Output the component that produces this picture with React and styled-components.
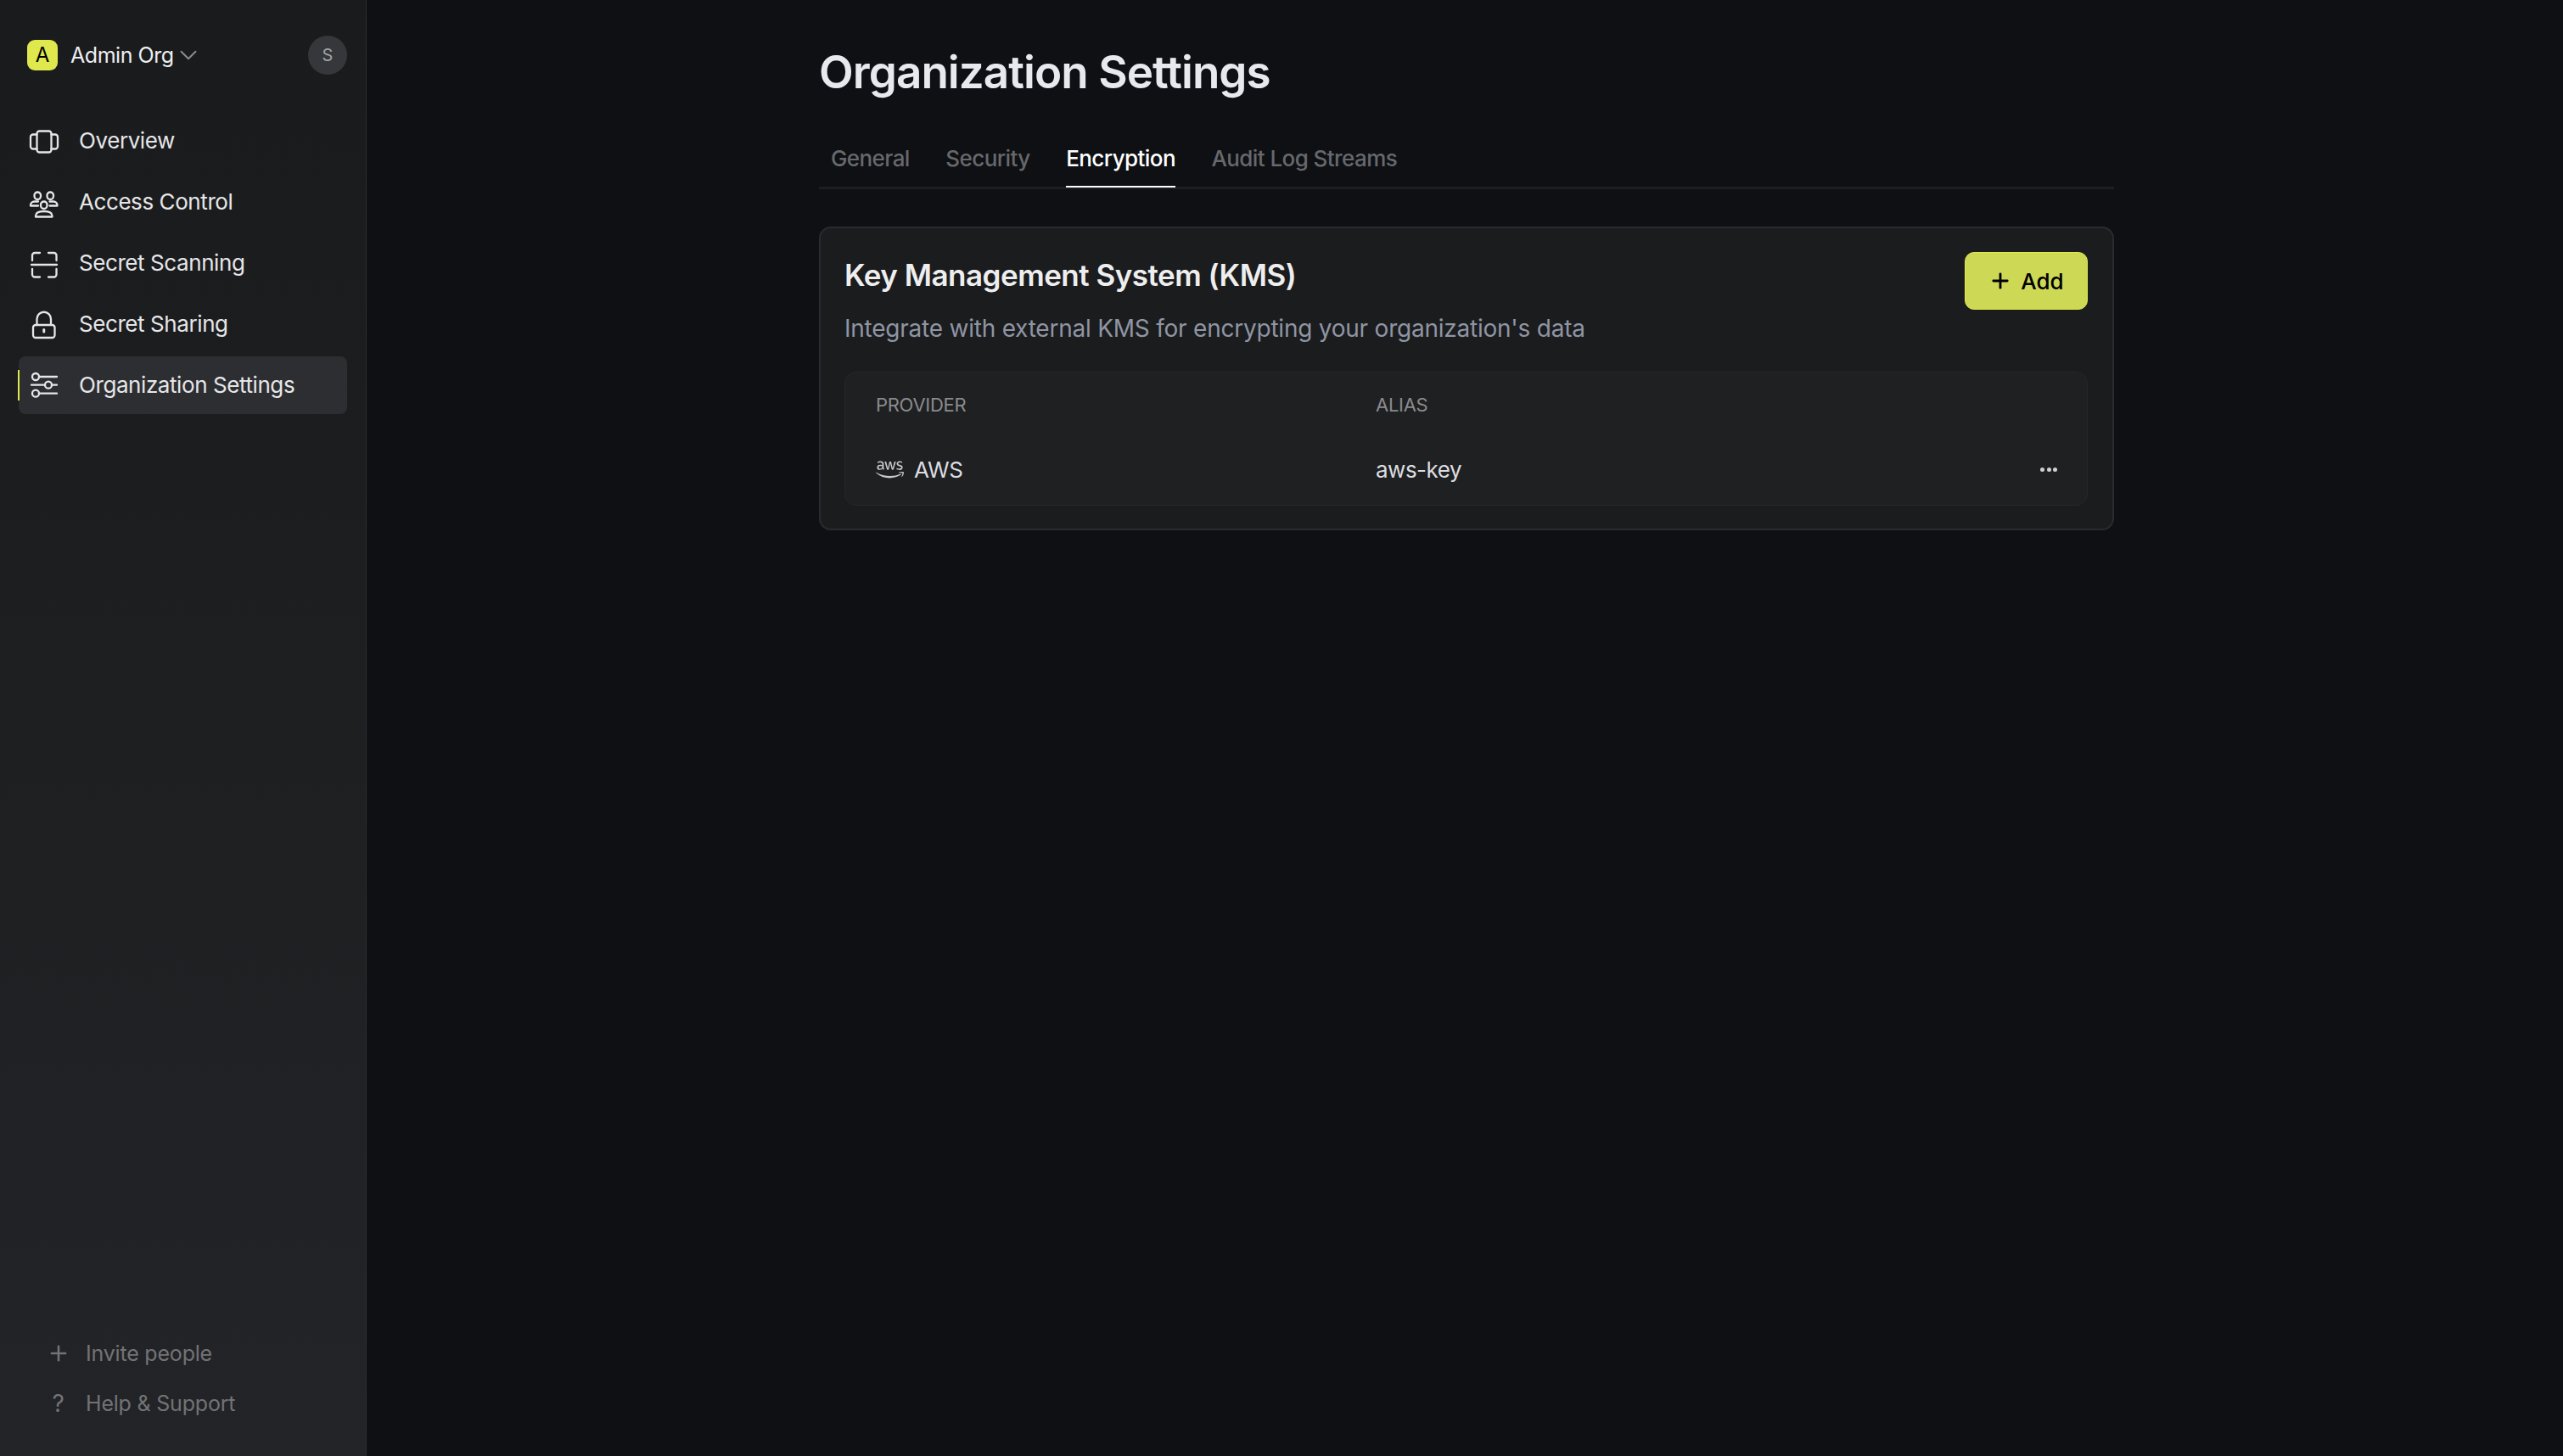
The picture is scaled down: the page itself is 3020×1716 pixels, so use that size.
import React from "react";
import styled, { createGlobalStyle } from "styled-components";
import { FaAws } from "react-icons/fa";
import { Plus, ChevronDown } from "lucide-react";

const NAV_ITEMS = [
  { label: "Overview", icon: "overview" },
  { label: "Access Control", icon: "access" },
  { label: "Secret Scanning", icon: "scan" },
  { label: "Secret Sharing", icon: "lock" },
  { label: "Organization Settings", icon: "sliders", active: true },
];

const TABS = ["General", "Security", "Encryption", "Audit Log Streams"];

const NavIcon = ({ name }) => (
  <svg width="36" height="36" viewBox="0 0 36 36" fill="none" stroke="currentColor" strokeWidth="2.3" strokeLinecap="round" strokeLinejoin="round" overflow="visible">
    {name === "overview" && (
      <>
        <rect x="9.500" y="6.500" width="17" height="25" rx="3" />
        <path d="M9.500 10.500H5a3 3 0 0 0-3 3v11a3 3 0 0 0 3 3h4.500" />
        <path d="M26.500 10.500H31a3 3 0 0 1 3 3v11a3 3 0 0 1-3 3h-4.500" />
      </>
    )}
    {name === "access" && (
      <>
        <rect x="6.500" y="6.500" width="7.500" height="8.500" rx="3.700" />
        <rect x="21.500" y="6.500" width="7.500" height="8.500" rx="3.700" />
        <rect x="14" y="17.500" width="7.500" height="8.500" rx="3.700" />
        <path d="M11 17.500H6.500a4.500 4.500 0 0 0-4.500 4.500v.5h9" />
        <path d="M24.500 17.500H29a4.500 4.500 0 0 1 4.500 4.500v.5h-9" />
        <path d="M8 35.500v-1c0-3.500 3-5.500 9.800-5.500s9.700 2 9.700 5.500v1z" />
      </>
    )}
    {name === "scan" && (
      <>
        <path d="M4 15V9a3 3 0 0 1 3-3h6" />
        <path d="M23 6h6.500a3 3 0 0 1 3 3v6" />
        <path d="M4 25v6.500a3 3 0 0 0 3 3h6" />
        <path d="M32.500 25v6.500a3 3 0 0 1-3 3H23" />
        <path d="M3 20h30" />
      </>
    )}
    {name === "lock" && (
      <>
        <rect x="5" y="19" width="25.500" height="15" rx="3" />
        <path d="M9.500 19v-7a8.250 8.250 0 0 1 16.500 0v7" />
        <path d="M17.750 24.500v2.500" strokeWidth="3" />
      </>
    )}
    {name === "sliders" && (
      <>
        <circle cx="8" cy="8" r="4" />
        <path d="M12 8h21" />
        <circle cx="23" cy="17.700" r="4" />
        <path d="M3 17.700h16M27 17.700h6" />
        <circle cx="8" cy="27.700" r="4" />
        <path d="M12 27.700h21" />
      </>
    )}
  </svg>
);

const App = () => {
  return (
    <>
      <GlobalStyle />
      <Page>
        <Sidebar>
          <OrgHeader>
            <OrgSwitcher>
              <OrgBadge>A</OrgBadge>
              <OrgName>Admin Org</OrgName>
              <ChevronDown size={34} color="#8a8b8d" strokeWidth={1.4} />
            </OrgSwitcher>
            <Avatar>S</Avatar>
          </OrgHeader>

          <NavList>
            {NAV_ITEMS.map((item) => (
              <NavItem key={item.label} $active={item.active}>
                <IconSlot>
                  <NavIcon name={item.icon} />
                </IconSlot>
                {item.label}
              </NavItem>
            ))}
          </NavList>

          <FooterLinks>
            <FooterLink>
              <FooterIcon>
                <Plus size={28} strokeWidth={2.2} />
              </FooterIcon>
              Invite people
            </FooterLink>
            <FooterLink>
              <FooterIcon>?</FooterIcon>
              Help &amp; Support
            </FooterLink>
          </FooterLinks>
        </Sidebar>

        <Main>
          <Title>Organization Settings</Title>
          <TabBar>
            {TABS.map((tab) => (
              <Tab key={tab} $active={tab === "Encryption"}>
                {tab}
              </Tab>
            ))}
          </TabBar>

          <Card>
            <CardHeader>
              <div>
                <CardTitle>Key Management System (KMS)</CardTitle>
                <CardSubtitle>Integrate with external KMS for encrypting your organization's data</CardSubtitle>
              </div>
              <AddButton>
                <Plus size={28} strokeWidth={2.4} />
                Add
              </AddButton>
            </CardHeader>

            <TableWrap>
              <HeadRow>
                <HeadCell>Provider</HeadCell>
                <HeadCell>Alias</HeadCell>
              </HeadRow>
              <BodyRow>
                <ProviderCell>
                  <FaAws size={33} color="#c9cacc" />
                  AWS
                </ProviderCell>
                <BodyCell>aws-key</BodyCell>
                <Dots>
                  <Dot />
                  <Dot />
                  <Dot />
                </Dots>
              </BodyRow>
            </TableWrap>
          </Card>
        </Main>
      </Page>
    </>
  );
};

export default App;

const GlobalStyle = createGlobalStyle`
  html, body {
    margin: 0;
    padding: 0;
    background: #0e1014;
  }
  * {
    box-sizing: border-box;
  }
`;

const Page = styled.div`
  display: flex;
  width: 100%;
  height: 1716px;
  overflow: hidden;
  background: #0e1014;
  font-family: Inter, "Liberation Sans", sans-serif;
`;

const Sidebar = styled.aside`
  width: 432px;
  flex-shrink: 0;
  display: flex;
  flex-direction: column;
  padding: 41px 22px 0 22px;
  background: linear-gradient(180deg, #1a1b1d 0%, #1c1d1f 30%, #232427 100%);
  border-right: 1px solid #2c2d30;
`;

const OrgHeader = styled.div`
  display: flex;
  align-items: center;
  justify-content: space-between;
  height: 47px;
  margin-bottom: 44px;
`;

const OrgSwitcher = styled.div`
  display: flex;
  align-items: center;
  padding-left: 10px;
`;

const OrgBadge = styled.div`
  width: 36px;
  height: 36px;
  margin-right: 15px;
  border-radius: 9px;
  background: #dfe84d;
  color: #000;
  font-size: 24px;
  display: flex;
  align-items: center;
  justify-content: center;
`;

const OrgName = styled.span`
  font-size: 25px;
  letter-spacing: -0.45px;
  color: #eeeef0;
`;

const Avatar = styled.div`
  width: 46px;
  height: 46px;
  border-radius: 50%;
  background: #36373a;
  color: #a0a1a4;
  font-size: 20px;
  display: flex;
  align-items: center;
  justify-content: center;
`;

const NavList = styled.nav`
  display: flex;
  flex-direction: column;
  gap: 4px;
  flex: 1;
`;

const NavItem = styled.div`
  position: relative;
  height: 68px;
  display: flex;
  align-items: center;
  gap: 23px;
  padding-left: 12px;
  padding-bottom: 1px;
  border-radius: 8px;
  font-size: 26px;
  letter-spacing: -0.42px;
  color: #e6e6e8;
  background: ${(props) => (props.$active ? "#2d2e32" : "transparent")};

  ${(props) =>
    props.$active &&
    `
    &::before {
      content: "";
      position: absolute;
      left: -1px;
      top: 16px;
      width: 2px;
      height: 36px;
      background: #dfe84d;
    }
  `}
`;

const IconSlot = styled.span`
  width: 36px;
  height: 36px;
  flex-shrink: 0;
  display: flex;
  color: #e6e6e8;
`;

const FooterLinks = styled.div`
  display: flex;
  flex-direction: column;
  gap: 19px;
  padding: 0 0 42px 30px;
`;

const FooterLink = styled.div`
  height: 40px;
  display: flex;
  align-items: center;
  gap: 16px;
  font-size: 25px;
  letter-spacing: -0.2px;
  color: #727376;
`;

const FooterIcon = styled.span`
  width: 33px;
  display: flex;
  justify-content: center;
  color: #727376;
  font-size: 28px;
`;

const Main = styled.main`
  flex: 1;
  padding: 55px 0 0 533px;
  width: 100%;
`;

const Title = styled.h1`
  margin: 0;
  font-size: 53px;
  line-height: 60px;
  font-weight: 600;
  color: #e8e9ee;
  letter-spacing: -0.95px;
`;

const TabBar = styled.div`
  display: flex;
  gap: 42.5px;
  width: 1526px;
  height: 108px;
  padding: 53px 0 0 14px;
  border-bottom: 3px solid #1d1e21;
`;

const Tab = styled.div`
  height: 53px;
  padding-top: 3px;
  font-size: 26px;
  letter-spacing: -0.58px;
  font-weight: 500;
  color: ${(props) => (props.$active ? "#fff" : "#67686c")};
  border-bottom: ${(props) => (props.$active ? "2px solid #fff" : "2px solid transparent")};
`;

const Card = styled.section`
  width: 1526px;
  height: 358px;
  margin-top: 44px;
  padding: 28px 29px 29px 28px;
  border: 2px solid #2a2b2f;
  border-radius: 14px;
  background: #1b1c1e;
`;

const CardHeader = styled.div`
  display: flex;
  justify-content: space-between;
  align-items: flex-start;
  height: 141px;
`;

const CardTitle = styled.h2`
  margin: 0;
  padding-top: 5px;
  font-size: 35px;
  line-height: 44px;
  font-weight: 600;
  letter-spacing: -0.5px;
  color: #eeeeef;
`;

const CardSubtitle = styled.p`
  margin: 23px 0 0;
  font-size: 28px;
  line-height: 36px;
  letter-spacing: -0.23px;
  color: #8f95a3;
`;

const AddButton = styled.button`
  width: 145px;
  height: 68px;
  display: flex;
  align-items: center;
  justify-content: center;
  gap: 10px;
  border: 1px solid #dfe84d;
  border-radius: 11px;
  background: #cdd855;
  color: #000;
  font-family: inherit;
  font-size: 26px;
  font-weight: 500;
`;

const TableWrap = styled.div`
  height: 158px;
  border: 1px solid #26272a;
  border-radius: 14px;
  background: #1f2022;
`;

const HeadRow = styled.div`
  display: grid;
  grid-template-columns: 589px 1fr;
  padding: 0 36px;
  height: 75px;
  align-items: center;
`;

const HeadCell = styled.span`
  font-size: 22px;
  letter-spacing: -0.3px;
  text-transform: uppercase;
  color: #8a8b8e;
`;

const BodyRow = styled.div`
  display: grid;
  grid-template-columns: 589px 1fr auto;
  padding: 0 35px 0 36px;
  height: 78px;
  align-items: center;
`;

const ProviderCell = styled.div`
  display: flex;
  align-items: center;
  gap: 12px;
  font-size: 26px;
  letter-spacing: -0.4px;
  color: #dcdde0;
`;

const BodyCell = styled.div`
  font-size: 26px;
  letter-spacing: -0.5px;
  color: #dcdde0;
`;

const Dots = styled.div`
  display: flex;
  gap: 2.500px;
`;

const Dot = styled.span`
  width: 5px;
  height: 5px;
  border-radius: 50%;
  background: #cfd0d3;
`;
